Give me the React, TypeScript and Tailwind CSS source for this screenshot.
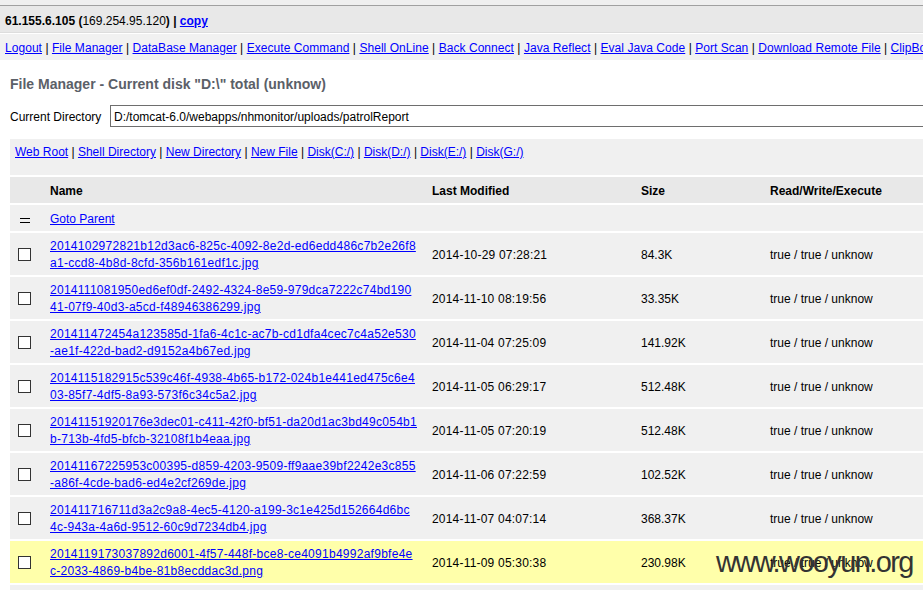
import React from "react";

const rows = [
  ["2014102972821b12d3ac6-825c-4092-8e2d-ed6edd486c7b2e26f8", "a1-ccd8-4b8d-8cfd-356b161edf1c.jpg", "2014-10-29 07:28:21", "84.3K"],
  ["2014111081950ed6ef0df-2492-4324-8e59-979dca7222c74bd190", "41-07f9-40d3-a5cd-f48946386299.jpg", "2014-11-10 08:19:56", "33.35K"],
  ["201411472454a123585d-1fa6-4c1c-ac7b-cd1dfa4cec7c4a52e530", "-ae1f-422d-bad2-d9152a4b67ed.jpg", "2014-11-04 07:25:09", "141.92K"],
  ["2014115182915c539c46f-4938-4b65-b172-024b1e441ed475c6e4", "03-85f7-4df5-8a93-573f6c34c5a2.jpg", "2014-11-05 06:29:17", "512.48K"],
  ["20141151920176e3dec01-c411-42f0-bf51-da20d1ac3bd49c054b1", "b-713b-4fd5-bfcb-32108f1b4eaa.jpg", "2014-11-05 07:20:19", "512.48K"],
  ["20141167225953c00395-d859-4203-9509-ff9aae39bf2242e3c855", "-a86f-4cde-bad6-ed4e2cf269de.jpg", "2014-11-06 07:22:59", "102.52K"],
  ["201411716711d3a2c9a8-4ec5-4120-a199-3c1e425d152664d6bc", "4c-943a-4a6d-9512-60c9d7234db4.jpg", "2014-11-07 04:07:14", "368.37K"],
  ["2014119173037892d6001-4f57-448f-bce8-ce4091b4992af9bfe4e", "c-2033-4869-b4be-81b8ecddac3d.png", "2014-11-09 05:30:38", "230.98K"],
  ["20141110123356a8f1c2d0-7e21-4b3a-9c55-1d2e3f4a5b6c7d8e9f0a", "-1b2c-4d5e-8f90-a1b2c3d4e5f6.jpg", "2014-11-10 12:33:56", "98.12K"],
];

const navLinks = [
  "Logout", "File Manager", "DataBase Manager", "Execute Command", "Shell OnLine",
  "Back Connect", "Java Reflect", "Eval Java Code", "Port Scan", "Download Remote File",
  "ClipBoard", "Remote Control", "Port Map", "JSP Env", "Other", "About",
];

const diskLinks = [
  "Web Root", "Shell Directory", "New Directory", "New File",
  "Disk(C:/)", "Disk(D:/)", "Disk(E:/)", "Disk(G:/)",
];

function Links({ items }: { items: string[] }) {
  return (
    <>
      {items.map((t, i) => (
        <React.Fragment key={t}>
          {i > 0 && <span> | </span>}
          <a className="text-[#0000ff] underline cursor-pointer">{t}</a>
        </React.Fragment>
      ))}
    </>
  );
}

function Check() {
  return <div className="w-[13px] h-[13px] border border-[#333] bg-white" />;
}

export default function App() {
  const font = { fontFamily: '"Liberation Sans", Arial, sans-serif' };
  return (
    <div
      className="relative w-[923px] h-[590px] overflow-hidden bg-white text-[12px] leading-[16px] text-black"
      style={font}
    >
      <div className="w-[1010px]">
        <div className="h-[5px] bg-[#efefef]" />
        <div className="h-[1px] bg-[#a0a0a0]" />
        {/* header */}
        <div className="h-[27px] pl-[5px] pt-[7px] bg-[#e8e8e8] border-b border-[#dddddd] font-bold whitespace-nowrap">
          61.155.6.105 (<span className="font-normal">169.254.95.120</span>) |{" "}
          <a className="text-[#0000ff] underline">copy</a>
        </div>
        {/* nav */}
        <div className="h-[28px] pl-[5px] pt-[6px] bg-[#f1f1f1] border-t border-white border-b border-[#dddddd] whitespace-nowrap tracking-[0.05px]">
          <Links items={navLinks} />
        </div>
        {/* main */}
        <div className="pl-[10px] pt-[11px]">
          <h2 className="h-[24px] leading-[24px] text-[14px] font-bold text-[#5b6068]">
            File Manager - Current disk "D:\" total (unknow)
          </h2>
          <div className="flex items-start mt-[9px] h-[22px]">
            <span className="w-[100px] pt-[4px]">Current Directory</span>
            <div className="h-[22px] w-[900px] border border-[#6e6e6e] bg-white pl-[3px] pt-[3px] leading-[16px]">
              D:/tomcat-6.0/webapps/nhmonitor/uploads/patrolReport
            </div>
          </div>
          <div className="mt-[11px]">
            {/* disk links block */}
            <div className="h-[38px] bg-[#f0f0f0] border-t border-white border-b border-[#dddddd] pl-[5px] pt-[5px] whitespace-nowrap">
              <Links items={diskLinks} />
            </div>
            {/* head row */}
            <div className="grid grid-cols-[35px_382px_209px_129px_1fr] h-[28px] pt-[2px] bg-[#e8e8e8] border-t border-white border-b border-[#dddddd] font-bold items-center">
              <div />
              <div className="pl-[5px]">Name</div>
              <div className="pl-[5px]">Last Modified</div>
              <div className="pl-[5px]">Size</div>
              <div className="pl-[5px]">Read/Write/Execute</div>
            </div>
            {/* goto parent */}
            <div className="grid grid-cols-[35px_382px_209px_129px_1fr] h-[28px] pt-[2px] bg-[#f0f0f0] border-t border-white border-b border-[#dddddd] items-center">
              <div className="pl-[10px] pt-[2px]">
                <div className="w-[10px] h-[5px] border-y border-black" />
              </div>
              <div className="pl-[5px]">
                <a className="text-[#0000ff] underline">Goto Parent</a>
              </div>
              <div />
              <div />
              <div />
            </div>
            {rows.map((r, i) => (
              <div
                key={i}
                className={`grid grid-cols-[35px_382px_209px_129px_1fr] h-[44px] pt-[2px] border-t border-white border-b border-[#dddddd] items-center ${
                  i === 7 ? "bg-[#ffffaa]" : "bg-[#f0f0f0]"
                }`}
              >
                <div className="pl-[8px] -mt-[2px]">
                  <Check />
                </div>
                <div className="pl-[5px] leading-[17px] whitespace-nowrap tracking-[0.27px]">
                  <a className="text-[#0000ff] underline">
                    {r[0]}
                    <br />
                    {r[1]}
                  </a>
                </div>
                <div className="pl-[5px] tracking-[0.2px]">{r[2]}</div>
                <div className="pl-[5px]">{r[3]}</div>
                <div className="pl-[5px]">true / true / unknow</div>
              </div>
            ))}
          </div>
        </div>
      </div>
      <div
        className="absolute left-[716px] top-[544px] text-[29px] leading-[36px] tracking-[-1.6px] text-[#333333] whitespace-nowrap"
        style={font}
      >
        www.wooyun.org
      </div>
    </div>
  );
}
